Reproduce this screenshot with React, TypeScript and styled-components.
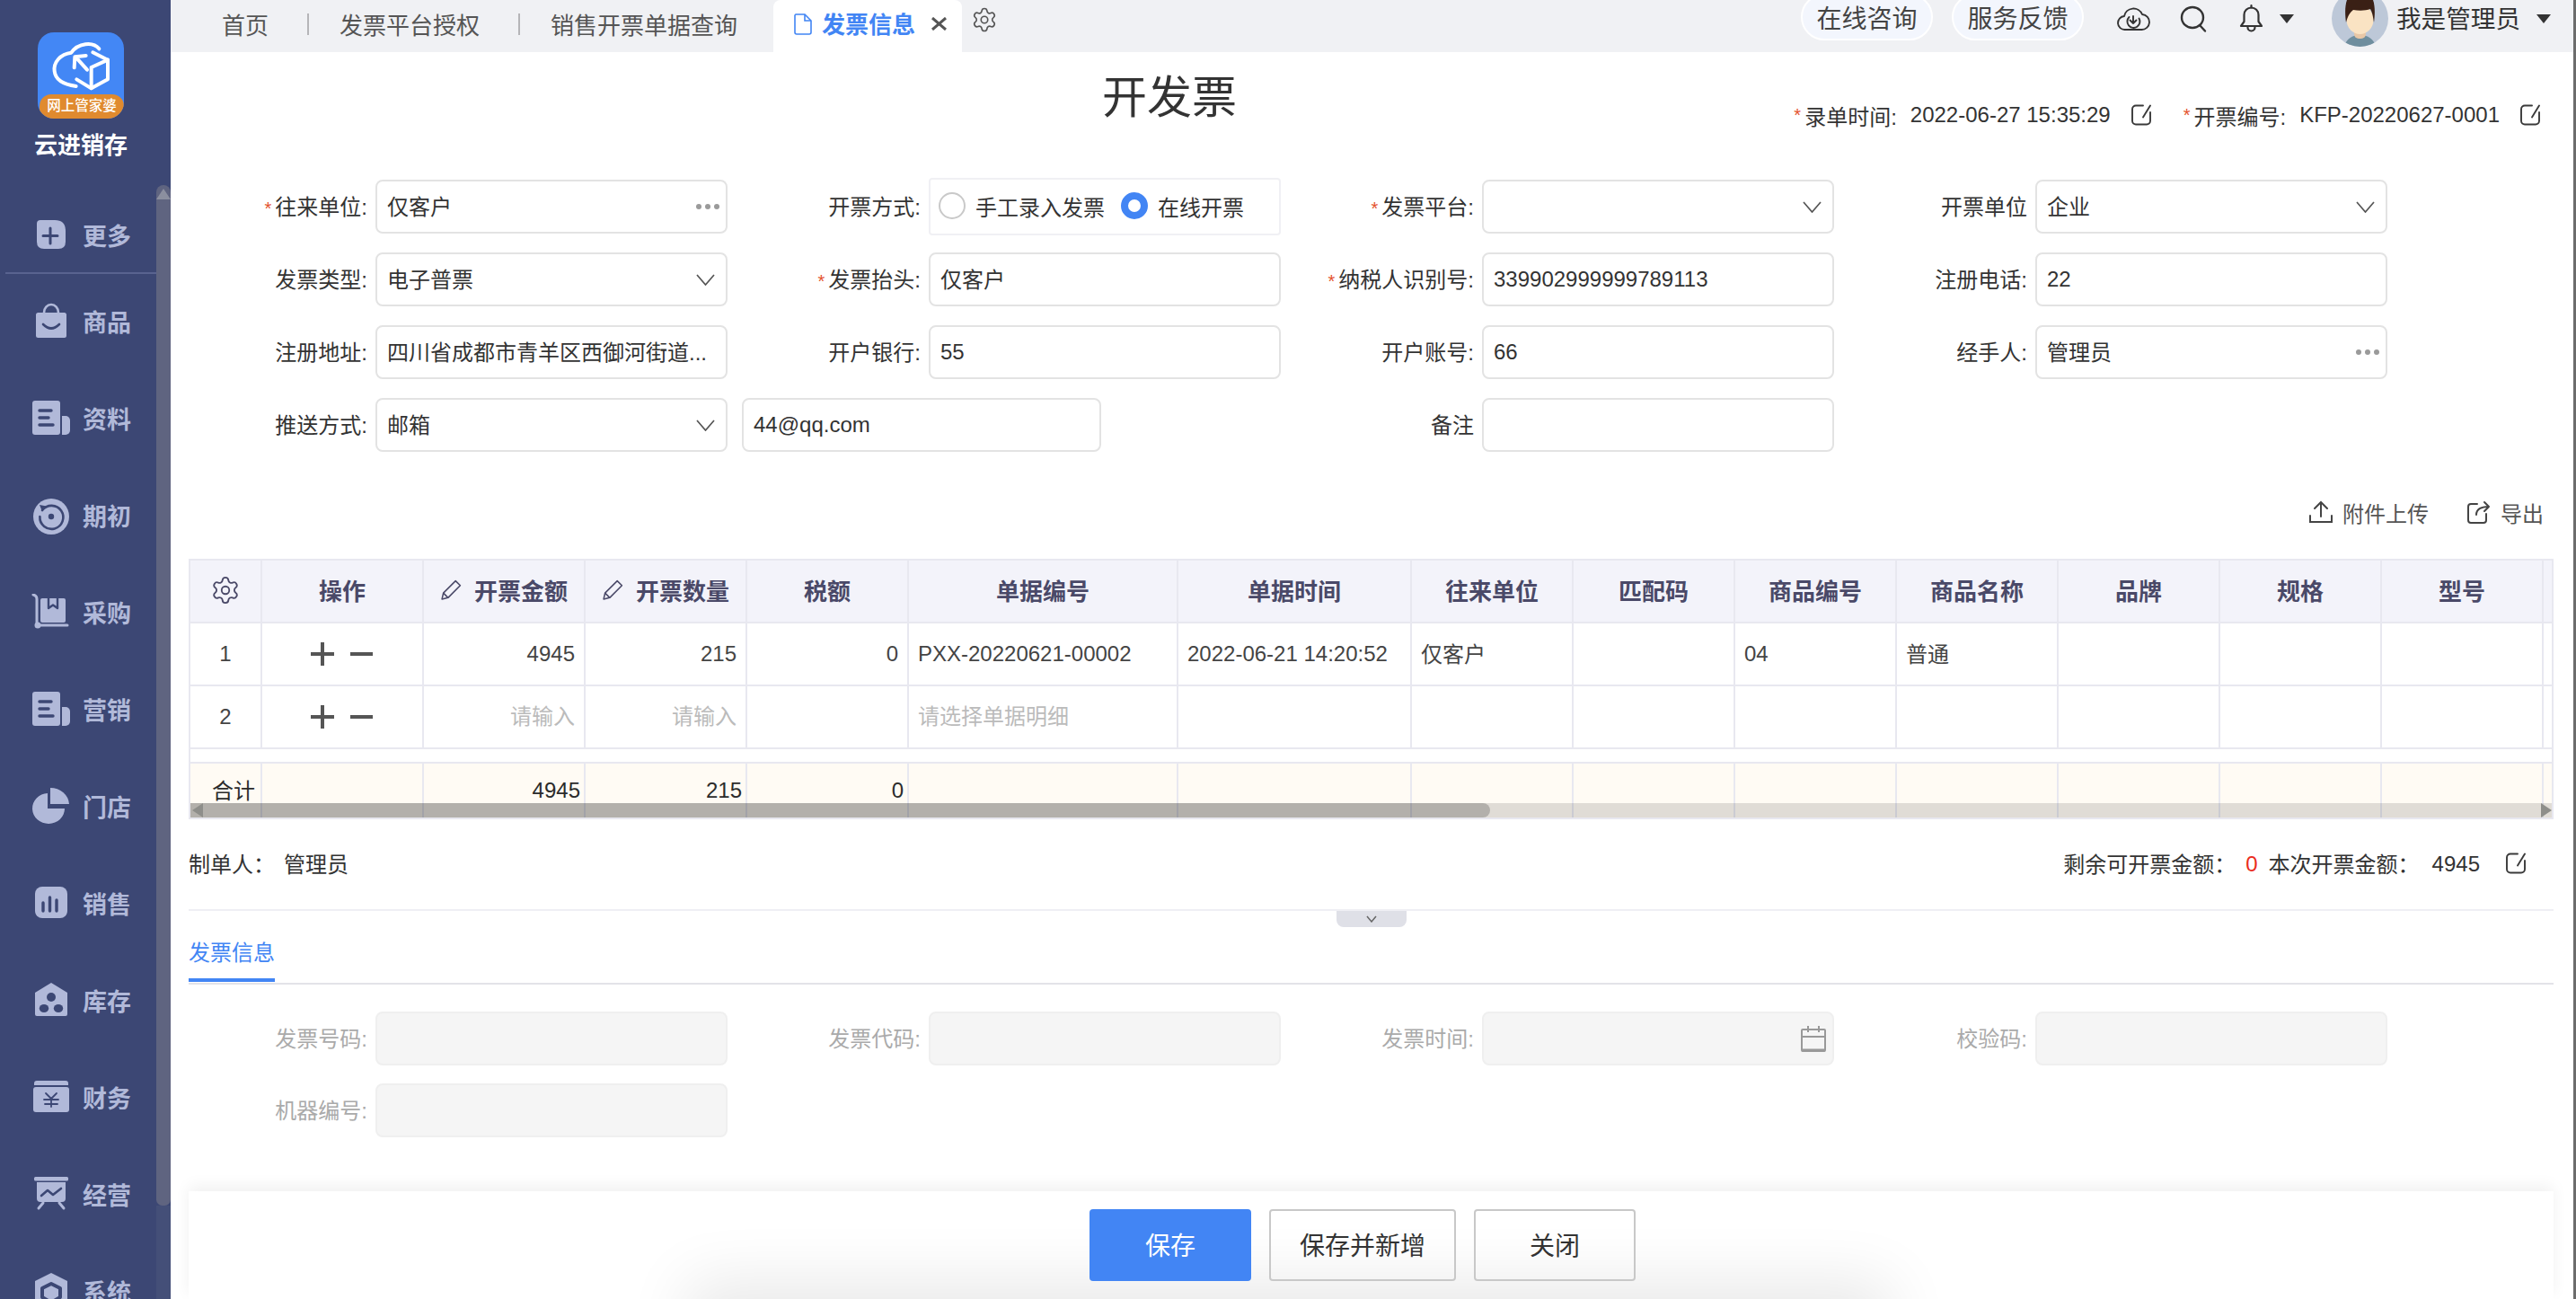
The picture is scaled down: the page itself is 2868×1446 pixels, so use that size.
import React from 'react'
import styled, { createGlobalStyle } from 'styled-components'
import { Settings } from 'lucide-react'

const NAVY = '#3c4774'
const ICON = '#b1b9d9'
const BLUE = '#4285f4'
const LINE = '#e8e8f0'
const HEAD_TEXT = '#4a4968'

const GlobalStyle = createGlobalStyle`
  html, body {
    margin: 0;
    padding: 0;
    background: #fff;
  }
  * {
    box-sizing: border-box;
  }
  body {
    font-family: "Liberation Sans", "Noto Sans CJK SC", sans-serif;
    font-size: 24px;
    color: #333;
  }
`

const Page = styled.div`
  width: 2868px;
  height: 1446px;
  display: flex;
  overflow: hidden;
  background: #fff;
`

/* sidebar */

const Sidebar = styled.aside`
  width: 190px;
  flex-shrink: 0;
  display: flex;
  background: ${NAVY};
`

const SideBody = styled.div`
  width: 174px;
  flex-shrink: 0;
`

const Brand = styled.div`
  padding: 36px 0 0 6px;
  display: flex;
  flex-direction: column;
  align-items: center;
`

const Logo = styled.div`
  width: 96px;
  height: 96px;
  border-radius: 18px;
  background: #4387f5;
  overflow: hidden;
  display: flex;
  flex-direction: column;
  justify-content: flex-end;
  position: relative;
`

const LogoMark = styled.svg`
  position: absolute;
  top: 0;
  left: 0;
  width: 96px;
  height: 96px;
`

const LogoBand = styled.div`
  height: 27px;
  margin-left: 2px;
  border-radius: 13px 13px 8px 8px;
  background: #e08a2e;
  color: #fff;
  font-size: 15.5px;
  font-weight: 500;
  line-height: 26px;
  text-align: center;
  white-space: nowrap;
`

const BrandName = styled.div`
  margin-top: 12px;
  color: #fff;
  font-size: 26px;
  line-height: 36px;
  font-weight: 700;
`

const NavItem = styled.div<{ $first?: boolean }>`
  display: flex;
  align-items: center;
  gap: 13px;
  padding-left: 35px;
  color: ${ICON};
  font-size: 27px;
  font-weight: 700;
  height: ${({ $first }) => ($first ? '84px' : '108px')};
  margin-top: ${({ $first }) => ($first ? '41px' : '0')};
  margin-left: ${({ $first }) => ($first ? '6px' : '0')};
  ${({ $first }) => ($first ? `padding-left: 29px; border-bottom: 2px solid #59638f;` : '')}
`

const NavLabel = styled.span<{ $first?: boolean }>`
  padding-bottom: ${({ $first }) => ($first ? '1px' : '3px')};
`

const NavIcon = styled.svg`
  width: 44px;
  height: 44px;
  flex-shrink: 0;
`

const SideTrack = styled.div`
  width: 16px;
  padding-top: 206px;
  display: flex;
  flex-direction: column;
`

const SideThumb = styled.div`
  height: 1136px;
  flex-shrink: 0;
  background: #5f6480;
  border-radius: 12px 12px 10px 10px;
  display: flex;
  justify-content: center;
  padding-top: 4px;
`

const SideArrow = styled.div`
  width: 0;
  height: 0;
  border-left: 8px solid transparent;
  border-right: 8px solid transparent;
  border-bottom: 12px solid #8b8f9f;
`

const SideTrackRest = styled.div`
  flex: 1;
  background: #444f78;
`

/* top bar */

const Main = styled.main`
  flex: 1;
  min-width: 0;
  display: flex;
  flex-direction: column;
`

const Edge = styled.div`
  width: 3px;
  flex-shrink: 0;
  background: #6c6c6c;
`

const Topbar = styled.header`
  height: 58px;
  flex-shrink: 0;
  display: flex;
  justify-content: space-between;
  background: #f0f1f4;
  padding-left: 57px;
`

const Tabs = styled.nav`
  display: flex;
  align-items: center;
  height: 58px;
`

const Tab = styled.span`
  font-size: 26px;
  color: #555;
  white-space: nowrap;
  padding-bottom: 6px;
`

const TabDivider = styled.i`
  width: 2px;
  height: 24px;
  margin: -5px 34px 0 43px;
  background: #b5b5b8;
`

const ActiveTab = styled.div`
  width: 210px;
  height: 58px;
  margin-left: 40px;
  display: flex;
  align-items: center;
  padding: 0 0 5px 23px;
  background: #fff;
  border-radius: 8px 8px 0 0;
  color: ${BLUE};
  font-size: 26px;
  font-weight: 700;
`

const TabText = styled.span`
  margin: 0 18px 0 11px;
  padding-bottom: 2px;
  white-space: nowrap;
`

const TabGear = styled.div`
  margin: -14px 0 0 10px;
  display: flex;
  color: #555;
`

const ToolArea = styled.div`
  display: flex;
  align-items: flex-start;
  padding-right: 25px;
`

const Pill = styled.div<{ $after: number }>`
  width: 147px;
  height: 52px;
  margin: -7px ${({ $after }) => $after}px 0 0;
  display: flex;
  align-items: center;
  justify-content: center;
  border: 2px solid #fff;
  border-radius: 26px;
  background: #f3f6fd;
  font-size: 28px;
  color: #444;
  white-space: nowrap;
`

const ToolIcon = styled.svg<{ $top: number; $after: number }>`
  flex-shrink: 0;
  margin: ${({ $top }) => $top}px ${({ $after }) => $after}px 0 0;
  overflow: visible;
`

const Caret = styled.i<{ $after?: number }>`
  width: 0;
  height: 0;
  margin: 16px ${({ $after }) => $after ?? 0}px 0 0;
  border-left: 8px solid transparent;
  border-right: 8px solid transparent;
  border-top: 10px solid #333;
`

const Avatar = styled.svg`
  width: 63px;
  height: 63px;
  margin: -11px 9px 0 0;
  flex-shrink: 0;
`

const UserName = styled.span`
  margin-right: 18px;
  font-size: 27.6px;
  line-height: 44px;
  color: #333;
  white-space: nowrap;
`

/* content */

const TitleRow = styled.div`
  height: 142px;
  flex-shrink: 0;
  display: flex;
  justify-content: space-between;
  padding: 0 36px 0 1037px;
`

const Title = styled.h1`
  margin: 27px 0 0;
  font-size: 50px;
  line-height: 48px;
  font-weight: 400;
  color: #333;
  white-space: nowrap;
`

const Meta = styled.div`
  display: flex;
  align-items: center;
  height: 32px;
  margin-top: 54px;
  white-space: nowrap;
`

const Star = styled.span`
  color: #e4512c;
  font-size: 20px;
  margin-right: 4px;
`

const MetaValue = styled.span`
  margin-left: 15px;
`

const EditIcon = styled.svg<{ $before: number; $after?: number }>`
  width: 24px;
  height: 24px;
  flex-shrink: 0;
  margin: 0 ${({ $after }) => $after ?? 0}px 0 ${({ $before }) => $before}px;
`

const FormGrid = styled.div<{ $rowGap: number; $inset?: number }>`
  display: grid;
  grid-template-columns: repeat(4, 616px);
  grid-auto-rows: 60px;
  row-gap: ${({ $rowGap }) => $rowGap}px;
  margin-left: ${({ $inset }) => $inset ?? 0}px;
`

const Field = styled.div`
  display: flex;
  align-items: center;
`

const FieldLabel = styled.label<{ $off?: boolean }>`
  width: 215px;
  margin-right: 9px;
  padding-bottom: 3px;
  text-align: right;
  white-space: nowrap;
  color: ${({ $off }) => ($off ? '#aaa' : '#333')};
`

const Control = styled.div<{ $off?: boolean; $wide?: boolean }>`
  width: ${({ $wide }) => ($wide ? '400px' : '392px')};
  height: 60px;
  flex-shrink: 0;
  display: flex;
  align-items: center;
  justify-content: space-between;
  padding: 0 12px 0 11px;
  border: 2px solid ${({ $off }) => ($off ? '#efefef' : '#e3e3e3')};
  border-radius: 8px;
  background: ${({ $off }) => ($off ? '#f5f5f5' : '#fff')};
  color: #333;
  white-space: nowrap;
  ${({ $wide }) => ($wide ? 'margin-left: 16px;' : '')}
`

const ControlText = styled.span<{ $cjk?: boolean }>`
  padding-bottom: ${({ $cjk }) => ($cjk ? '3px' : '0')};
`

const Dots = styled.span`
  display: flex;
  gap: 4px;
  margin-right: -5px;
  i {
    width: 6px;
    height: 6px;
    border-radius: 50%;
    background: #9a9a9a;
  }
`

const RadioGroup = styled.div`
  width: 392px;
  height: 64px;
  flex-shrink: 0;
  display: flex;
  align-items: center;
  padding: 0 0 2px 9px;
  border: 2px solid #f0f0f4;
  border-radius: 4px;
`

const Radio = styled.i<{ $on?: boolean }>`
  width: 30px;
  height: 30px;
  flex-shrink: 0;
  border-radius: 50%;
  margin-right: 11px;
  background: #fff;
  border: ${({ $on }) => ($on ? `8px solid ${BLUE}` : '2px solid #c9c9c9')};
`

const RadioText = styled.span`
  margin-right: 18px;
  white-space: nowrap;
`

const Content = styled.div`
  padding: 0 22px 0 20px;
`

const Actions = styled.div`
  height: 40px;
  margin-top: 48px;
  padding: 0 11px 2px 0;
  display: flex;
  align-items: center;
  justify-content: flex-end;
  color: #555;
`

const ActionIcon = styled.svg<{ $before?: number }>`
  width: 26px;
  height: 26px;
  margin: 0 11px 0 ${({ $before }) => $before ?? 0}px;
`

/* table */

const Table = styled.div`
  margin-top: 31px;
  position: relative;
  border: 2px solid ${LINE};
  overflow: hidden;
`

const Row = styled.div<{ $kind?: 'head' | 'sum' }>`
  display: grid;
  grid-template-columns: 80px repeat(4, 180px) 300px 260px repeat(7, 180px) 1fr;
  background: ${({ $kind }) => ($kind === 'head' ? '#f3f3fa' : $kind === 'sum' ? '#fffbf4' : '#fff')};
  height: ${({ $kind }) => ($kind === 'sum' ? '60px' : '70px')};
  border-bottom: ${({ $kind }) => ($kind === 'sum' ? '0' : `2px solid ${LINE}`)};
`

const RowGap = styled.div`
  height: 14px;
  border-bottom: 2px solid ${LINE};
  box-sizing: content-box;
`

const Cell = styled.div<{ $align?: 'left' | 'right' | 'center'; $tone?: 'muted' | 'dark'; $cjk?: boolean }>`
  display: flex;
  align-items: center;
  justify-content: ${({ $align }) =>
    $align === 'right' ? 'flex-end' : $align === 'center' ? 'center' : 'flex-start'};
  padding: 0 10px ${({ $cjk, $tone }) => ($tone === 'muted' ? '5px' : $cjk ? '3px' : '0')};
  border-right: 2px solid ${LINE};
  white-space: nowrap;
  color: ${({ $tone }) => ($tone === 'muted' ? '#bbb' : $tone === 'dark' ? '#2b2b2b' : '#444')};
  &:last-child {
    border-right: 0;
  }
`

const HeadCell = styled.div`
  display: flex;
  align-items: center;
  justify-content: center;
  gap: 13px;
  padding-bottom: 3px;
  border-right: 2px solid ${LINE};
  color: ${HEAD_TEXT};
  font-size: 26px;
  font-weight: 600;
  white-space: nowrap;
  &:last-child {
    border-right: 0;
  }
`

const SumLabel = styled(Cell)`
  padding-left: 24px;
`

const SumCell = styled(Cell)`
  padding-right: 4px;
`

const Pencil = styled.svg`
  width: 25px;
  height: 25px;
  flex-shrink: 0;
`

const OpIcons = styled.svg`
  width: 70px;
  height: 26px;
`

const TableScroll = styled.div`
  position: absolute;
  left: 0;
  right: 0;
  bottom: 0;
  height: 16px;
  background: rgba(0, 0, 0, 0.12);
  display: flex;
  justify-content: space-between;
  align-items: center;
`

const TableThumb = styled.div`
  position: absolute;
  top: 0;
  bottom: 0;
  left: 0;
  width: 1447px;
  border-radius: 0 8px 8px 0;
  background: rgba(0, 0, 0, 0.2);
`

const ScrollArrow = styled.i<{ $dir: 'left' | 'right' }>`
  position: relative;
  z-index: 1;
  width: 0;
  height: 0;
  border-top: 8px solid transparent;
  border-bottom: 8px solid transparent;
  ${({ $dir }) =>
    $dir === 'left'
      ? 'border-right: 12px solid #8e8e8a; margin-left: 2px;'
      : 'border-left: 12px solid #8e8e8a; margin-right: 0;'}
`

/* info rows */

const InfoRow = styled.div`
  height: 102px;
  display: flex;
  align-items: center;
  justify-content: space-between;
  padding-right: 30px;
  border-bottom: 2px solid #efeff4;
  color: #333;
`

const InfoGroup = styled.div`
  display: flex;
  align-items: center;
  padding-bottom: 3px;
  white-space: nowrap;
`

const InfoValue = styled.span<{ $red?: boolean; $before: number; $after?: number; $latin?: boolean }>`
  margin: ${({ $latin }) => ($latin ? '3px' : '0')} ${({ $after }) => $after ?? 0}px 0 ${({ $before }) => $before}px;
  color: ${({ $red }) => ($red ? '#ea2c20' : '#333')};
`

const TabBar = styled.div`
  height: 82px;
  position: relative;
  border-bottom: 2px solid #e3e3e8;
  display: flex;
  align-items: flex-end;
`

const SectionTab = styled.div`
  height: 78px;
  width: 96px;
  margin-bottom: 1px;
  padding-top: 29px;
  border-bottom: 4px solid ${BLUE};
  color: ${BLUE};
  line-height: 34px;
  white-space: nowrap;
`

const Handle = styled.div`
  position: absolute;
  top: 0;
  left: 1278px;
  width: 78px;
  height: 18px;
  display: flex;
  align-items: center;
  justify-content: center;
  background: #dfe0e7;
  border-radius: 0 0 8px 8px;
`

const SecondForm = styled.div`
  margin: 30px 0 0 -16px;
`

const CalendarIcon = styled.svg`
  width: 28px;
  height: 30px;
  margin-right: -5px;
`

/* footer */

const Footer = styled.footer`
  margin-top: 60px;
  height: 120px;
  padding: 20px 19px 0 0;
  position: relative;
  display: flex;
  justify-content: center;
  gap: 20px;
  background: #fff;
  box-shadow: 0 -6px 16px rgba(0, 0, 0, 0.06);
`

const BottomGlow = styled.div`
  position: absolute;
  top: 140px;
  left: 595px;
  width: 1260px;
  height: 40px;
  box-shadow: 0 0 70px 40px rgba(0, 0, 0, 0.09);
`

const Button = styled.button<{ $primary?: boolean; $width: number }>`
  position: relative;
  width: ${({ $width }) => $width}px;
  height: 80px;
  padding: 0 0 3px;
  border: ${({ $primary }) => ($primary ? '0' : '2px solid #c8c8c8')};
  border-radius: 4px;
  background: ${({ $primary }) => ($primary ? BLUE : 'transparent')};
  color: ${({ $primary }) => ($primary ? '#fff' : '#333')};
  font-family: inherit;
  font-size: 28px;
`

/* icons */

const plain = { fill: 'none', stroke: ICON, strokeLinecap: 'round', strokeLinejoin: 'round' } as const
const cut = { fill: 'none', stroke: NAVY, strokeLinecap: 'round', strokeLinejoin: 'round' } as const

const PaperIcon = () => (
  <g>
    <rect x="1" y="1" width="31" height="38" rx="3" fill={ICON} />
    <path d="M34 18h4a5 5 0 0 1 5 5v11a5 5 0 0 1-5 5h-4z" fill={ICON} />
    <path d="M9 12h13M9 20h10M9 28h15" {...cut} strokeWidth="3.4" />
  </g>
)

const navIcons: Record<string, React.ReactNode> = {
  更多: (
    <g>
      <path d="M10 5h16q12 0 12 12v12q0 8-8 8H14q-8 0-8-8V9q0-4 4-4z" fill={ICON} />
      <path d="M21 14v17M13 22.5h16" {...cut} strokeWidth="3" />
    </g>
  ),
  商品: (
    <g>
      <path d="M14 11a8 9 0 0 1 16 0" {...plain} strokeWidth="2.6" />
      <rect x="5" y="11" width="34" height="28" rx="2.5" fill={ICON} />
      <path d="M13 24q9 9 18 0" {...cut} strokeWidth="2.6" />
    </g>
  ),
  资料: <PaperIcon />,
  期初: (
    <g>
      <circle cx="22" cy="22" r="20" fill={ICON} />
      <path d="M12 15a13 13 0 1 1-2.6 7" {...cut} strokeWidth="2.6" />
      <path d="M9 9l8 1.5-5 6z" fill={NAVY} />
      <circle cx="22" cy="22" r="3.2" fill={NAVY} />
    </g>
  ),
  采购: (
    <g>
      <path d="M2 1q4 1 4 5v29h34" {...plain} strokeWidth="3" />
      <circle cx="7" cy="35" r="3.5" fill={ICON} />
      <path d="M12 5h24q2 0 2 2v23q0 2-2 2H12q-2 0-2-2V7q0-2 2-2z" fill={ICON} />
      <path d="M19 5v11l5-3.5 5 3.5V5" {...cut} strokeWidth="2.4" />
    </g>
  ),
  营销: <PaperIcon />,
  门店: (
    <g>
      <path d="M21 0a21 19 0 0 1 21 18H21z" fill={ICON} />
      <path d="M18 6v17h19a18 17 0 1 1-19-17z" fill={ICON} />
    </g>
  ),
  销售: (
    <g>
      <rect x="4" y="2" width="36" height="35" rx="8" fill={ICON} />
      <path d="M13 20v9M20.5 14v15M28 17v12" {...cut} strokeWidth="3.4" />
    </g>
  ),
  库存: (
    <g>
      <path d="M22 1l18 11v24q0 2-2 2H6q-2 0-2-2V12z" fill={ICON} />
      <circle cx="22" cy="17" r="5" fill={NAVY} />
      <ellipse cx="14" cy="29.5" rx="5.2" ry="4.6" fill={NAVY} />
      <ellipse cx="30" cy="29.5" rx="5.2" ry="4.6" fill={NAVY} />
    </g>
  ),
  财务: (
    <g>
      <path d="M3 7V5q0-3 3-3h32q3 0 3 3v2z" fill={ICON} />
      <rect x="2" y="9" width="40" height="28" rx="3" fill={ICON} />
      <path d="M16 16l6 6 6-6M14 23h16M15 28h14M22 22v9" {...cut} strokeWidth="1.8" />
    </g>
  ),
  经营: (
    <g>
      <rect x="3" y="1" width="38" height="4.5" rx="1.5" fill={ICON} />
      <path d="M6 7h32v18q0 4-4 4H10q-4 0-4-4z" fill={ICON} />
      <path d="M11 22l7-6 6 5 9-7" {...cut} strokeWidth="2.6" />
      <path d="M13 30l-5 6M31 30l5 6" {...plain} strokeWidth="3" />
    </g>
  ),
  系统: (
    <g>
      <path d="M22 0l18 9v24l-18 11L4 33V9z" fill={ICON} />
      <path d="M22 12l10 5v10l-10 6-10-6V17z" {...cut} strokeWidth="4" />
    </g>
  ),
}

const navNames = ['商品', '资料', '期初', '采购', '营销', '门店', '销售', '库存', '财务', '经营', '系统']

const EditMark = ({ before, after }: { before: number; after?: number }) => (
  <EditIcon $before={before} $after={after} viewBox="0 0 24 24" fill="none" stroke="#3a3a3a" strokeWidth="1.9" strokeLinecap="round">
    <path d="M14 1.500H6a4 4 0 0 0-4 4v13a4 4 0 0 0 4 4h12a4 4 0 0 0 4-4V9" />
    <path d="M22 1.500l-8 13" />
  </EditIcon>
)

const Chevron = () => (
  <svg width="21" height="13" viewBox="0 0 21 13" fill="none" stroke="#555" strokeWidth="1.7">
    <path d="M1 1l9.500 11L20 1" />
  </svg>
)

const PencilMark = () => (
  <Pencil viewBox="0 0 24 24" fill="none" stroke={HEAD_TEXT} strokeWidth="1.5" strokeLinejoin="round">
    <path d="M2 22l1.500-6.500L16.500 2.500l5 5-13 13z" />
    <path d="M3.500 15.500l5 5" />
  </Pencil>
)

const OpMarks = () => (
  <OpIcons viewBox="0 0 70 26" fill="none" stroke="#555" strokeWidth="4">
    <path d="M13 0v26M0 13h26M44 13h25" />
  </OpIcons>
)

type Col = { title: string; edit?: boolean }

const columns: Col[] = [
  { title: '操作' },
  { title: '开票金额', edit: true },
  { title: '开票数量', edit: true },
  { title: '税额' },
  { title: '单据编号' },
  { title: '单据时间' },
  { title: '往来单位' },
  { title: '匹配码' },
  { title: '商品编号' },
  { title: '商品名称' },
  { title: '品牌' },
  { title: '规格' },
  { title: '型号' },
]

const blanks = (n: number) =>
  Array.from({ length: n }, (_, i) => <Cell key={`blank-${i}`} />)

const isCjk = (text?: string) => /[^\x00-\x7f]/.test(text ?? '')

const DisabledField = ({ label, calendar }: { label: string; calendar?: boolean }) => (
  <Field>
    <FieldLabel $off>{label}</FieldLabel>
    <Control $off>
      <span />
      {calendar && (
        <CalendarIcon viewBox="0 0 28 30" fill="none" stroke="#999" strokeWidth="2">
          <rect x="1" y="5" width="26" height="24" rx="1" />
          <path d="M1 13h26M8 1v7M20 1v7" />
          <path d="M1 28h26" strokeWidth="3" />
        </CalendarIcon>
      )}
    </Control>
  </Field>
)

const TextField = ({
  label,
  value,
  required,
  suffix,
  noColon,
}: {
  label: string
  value?: string
  required?: boolean
  suffix?: React.ReactNode
  noColon?: boolean
}) => (
  <Field>
    <FieldLabel>
      {required && <Star>*</Star>}
      {label}
      {noColon ? '' : ':'}
    </FieldLabel>
    <Control>
      <ControlText $cjk={isCjk(value)}>{value}</ControlText>
      {suffix}
    </Control>
  </Field>
)

const More = () => (
  <Dots>
    <i />
    <i />
    <i />
  </Dots>
)

export default function App() {
  return (
    <Page>
      <GlobalStyle />
      <Sidebar>
        <SideBody>
          <Brand>
            <Logo>
              <LogoMark viewBox="0 0 288 288" fill="none" stroke="#fff" strokeWidth="12" strokeLinecap="round" strokeLinejoin="round">
                <path d="M205 55C185 30 135 35 112 68 76 72 52 100 56 130c3 26 26 44 72 50" />
                <path d="M184 67l50 25v65l-55 30-49-30" />
                <path d="M179 117v70M179 117l55-25" />
                <path d="M165 125l-38-42M122 118l2-36 37-4" />
              </LogoMark>
              <LogoBand>网上管家婆</LogoBand>
            </Logo>
            <BrandName>云进销存</BrandName>
          </Brand>
          <NavItem $first>
            <NavIcon viewBox="0 0 44 44">{navIcons['更多']}</NavIcon>
            <NavLabel $first>更多</NavLabel>
          </NavItem>
          {navNames.map((name) => (
            <NavItem key={name}>
              <NavIcon viewBox="0 0 44 44">{navIcons[name]}</NavIcon>
              <NavLabel>{name}</NavLabel>
            </NavItem>
          ))}
        </SideBody>
        <SideTrack>
          <SideThumb>
            <SideArrow />
          </SideThumb>
          <SideTrackRest />
        </SideTrack>
      </Sidebar>

      <Main>
        <Topbar>
          <Tabs>
            <Tab>首页</Tab>
            <TabDivider />
            <Tab>发票平台授权</Tab>
            <TabDivider />
            <Tab>销售开票单据查询</Tab>
            <ActiveTab>
              <svg width="20" height="24" viewBox="0 0 20 24" fill="none" stroke={BLUE} strokeWidth="1.6">
                <path d="M2 1h10l7 7v13a2 2 0 0 1-2 2H3a2 2 0 0 1-2-2V2z" />
                <path d="M12 1v7h7" />
              </svg>
              <TabText>发票信息</TabText>
              <svg width="17" height="15" viewBox="0 0 17 15" fill="none" stroke="#555" strokeWidth="3">
                <path d="M1 1l15 13M16 1L1 14" />
              </svg>
            </ActiveTab>
            <TabGear>
              <Settings size={30} strokeWidth={1.3} />
            </TabGear>
          </Tabs>
          <ToolArea>
            <Pill $after={21}>在线咨询</Pill>
            <Pill $after={37}>服务反馈</Pill>
            <ToolIcon $top={7} $after={35} width="36" height="28" viewBox="0 0 36 28" fill="none" stroke="#333" strokeWidth="1.9" strokeLinecap="round" strokeLinejoin="round">
              <path d="M9 26a7.500 7.500 0 0 1-1-15A10.500 10.500 0 0 1 28 9a8.500 8.500 0 0 1-1 17z" />
              <path d="M24.500 13.500a7 7 0 1 1-11-1.500" />
              <path d="M14.500 15.500l3.500 3.500 3.500-3.500M18 19v-8" />
            </ToolIcon>
            <ToolIcon $top={7} $after={37} width="28" height="28" viewBox="0 0 28 28" fill="none" stroke="#333" strokeWidth="2.4" strokeLinecap="round">
              <ellipse cx="13" cy="12.500" rx="12" ry="11.500" />
              <path d="M21 21l6 6.500" />
            </ToolIcon>
            <ToolIcon $top={5} $after={18} width="27" height="31" viewBox="0 0 27 31" fill="none" stroke="#333" strokeWidth="2.2" strokeLinejoin="round" strokeLinecap="round">
              <path d="M13.500 3.500a8 8 0 0 1 8 8V19l3.500 5H2l3.500-5v-7.500a8 8 0 0 1 8-8z" />
              <path d="M13.500 1v2.500M9.500 25.500a4 4 0 0 0 8 0" />
            </ToolIcon>
            <Caret $after={42} />
            <Avatar viewBox="0 0 63 63">
              <defs>
                <clipPath id="avatar-clip">
                  <circle cx="31.5" cy="31.5" r="31.5" />
                </clipPath>
              </defs>
              <g clipPath="url(#avatar-clip)">
                <rect width="63" height="63" fill="#bdc8d8" />
                <path d="M14 63c2-9 9-13 17.500-13S47 54 49 63z" fill="#6f8e9e" />
                <rect x="25" y="42" width="13" height="12" rx="5" fill="#e8c7a6" />
                <ellipse cx="31.5" cy="33" rx="15" ry="16" fill="#fae3c3" />
                <path d="M16 36c-2-14-2-36 15.500-36S49 22 47 36c-1-7-2-12-4-15-5 2-13 2-19 1-4 3-6 7-8 14z" fill="#3a2015" />
              </g>
            </Avatar>
            <UserName>我是管理员</UserName>
            <Caret />
          </ToolArea>
        </Topbar>

        <TitleRow>
          <Title>开发票</Title>
          <Meta>
            <Star>*</Star>
            录单时间:
            <MetaValue>2022-06-27 15:35:29</MetaValue>
            <EditMark before={22} after={35} />
            <Star>*</Star>
            开票编号:
            <MetaValue>KFP-20220627-0001</MetaValue>
            <EditMark before={22} />
          </Meta>
        </TitleRow>

        <FormGrid $rowGap={21} $inset={4}>
          <TextField label="往来单位" value="仅客户" required suffix={<More />} />
          <Field>
            <FieldLabel>开票方式:</FieldLabel>
            <RadioGroup>
              <Radio />
              <RadioText>手工录入发票</RadioText>
              <Radio $on />
              <RadioText>在线开票</RadioText>
            </RadioGroup>
          </Field>
          <TextField label="发票平台" required suffix={<Chevron />} />
          <TextField label="开票单位" value="企业" noColon suffix={<Chevron />} />

          <TextField label="发票类型" value="电子普票" suffix={<Chevron />} />
          <TextField label="发票抬头" value="仅客户" required />
          <TextField label="纳税人识别号" value="339902999999789113" required />
          <TextField label="注册电话" value="22" />

          <TextField label="注册地址" value="四川省成都市青羊区西御河街道..." />
          <TextField label="开户银行" value="55" />
          <TextField label="开户账号" value="66" />
          <TextField label="经手人" value="管理员" suffix={<More />} />

          <TextField label="推送方式" value="邮箱" suffix={<Chevron />} />
          <Control $wide>44@qq.com</Control>
          <TextField label="备注" noColon />
        </FormGrid>

        <Content>
          <Actions>
            <ActionIcon viewBox="0 0 26 26" fill="none" stroke="#444" strokeWidth="2" strokeLinecap="round">
              <path d="M13 18V2M6 9l7-7 7 7M1 17v7h24v-7" />
            </ActionIcon>
            附件上传
            <ActionIcon $before={43} viewBox="0 0 26 26" fill="none" stroke="#444" strokeWidth="2" strokeLinecap="round" strokeLinejoin="round">
              <path d="M11 4H4a3 3 0 0 0-3 3v15a3 3 0 0 0 3 3h14a3 3 0 0 0 3-3v-7" />
              <path d="M10 16c0-6 4-9 14-9M19 2l5 5-5 5" />
            </ActionIcon>
            导出
          </Actions>

          <Table>
            <Row $kind="head">
              <HeadCell>
                <Settings size={34} strokeWidth={1.3} />
              </HeadCell>
              {columns.map((col) => (
                <HeadCell key={col.title}>
                  {col.edit && <PencilMark />}
                  {col.title}
                </HeadCell>
              ))}
              <HeadCell />
            </Row>
            <Row>
              <Cell $align="center">1</Cell>
              <Cell $align="center">
                <OpMarks />
              </Cell>
              <Cell $align="right">4945</Cell>
              <Cell $align="right">215</Cell>
              <Cell $align="right">0</Cell>
              <Cell>PXX-20220621-00002</Cell>
              <Cell>2022-06-21 14:20:52</Cell>
              <Cell $cjk>仅客户</Cell>
              <Cell />
              <Cell>04</Cell>
              <Cell $cjk>普通</Cell>
              {blanks(4)}
            </Row>
            <Row>
              <Cell $align="center">2</Cell>
              <Cell $align="center">
                <OpMarks />
              </Cell>
              <Cell $align="right" $tone="muted">
                请输入
              </Cell>
              <Cell $align="right" $tone="muted">
                请输入
              </Cell>
              <Cell />
              <Cell $tone="muted">请选择单据明细</Cell>
              {blanks(9)}
            </Row>
            <RowGap />
            <Row $kind="sum">
              <SumLabel $tone="dark" $cjk>
                合计
              </SumLabel>
              <Cell />
              <SumCell $align="right" $tone="dark">
                4945
              </SumCell>
              <SumCell $align="right" $tone="dark">
                215
              </SumCell>
              <SumCell $align="right" $tone="dark">
                0
              </SumCell>
              {blanks(10)}
            </Row>
            <TableScroll>
              <TableThumb />
              <ScrollArrow $dir="left" />
              <ScrollArrow $dir="right" />
            </TableScroll>
          </Table>

          <InfoRow>
            <InfoGroup>
              制单人：
              <InfoValue $before={10}>管理员</InfoValue>
            </InfoGroup>
            <InfoGroup>
              剩余可开票金额：
              <InfoValue $red $latin $before={11} $after={12}>
                0
              </InfoValue>
              本次开票金额：
              <InfoValue $latin $before={14}>
                4945
              </InfoValue>
              <EditMark before={28} />
            </InfoGroup>
          </InfoRow>

          <TabBar>
            <SectionTab>发票信息</SectionTab>
            <Handle>
              <svg width="12" height="8" viewBox="0 0 12 8" fill="none" stroke="#666" strokeWidth="1.5">
                <path d="M1 1l5 6 5-6" />
              </svg>
            </Handle>
          </TabBar>

          <SecondForm>
            <FormGrid $rowGap={20}>
              <DisabledField label="发票号码:" />
              <DisabledField label="发票代码:" />
              <DisabledField label="发票时间:" calendar />
              <DisabledField label="校验码:" />
              <DisabledField label="机器编号:" />
            </FormGrid>
          </SecondForm>

          <Footer>
            <BottomGlow />
            <Button $primary $width={180}>
              保存
            </Button>
            <Button $width={208}>保存并新增</Button>
            <Button $width={180}>关闭</Button>
          </Footer>
        </Content>
      </Main>
      <Edge />
    </Page>
  )
}
